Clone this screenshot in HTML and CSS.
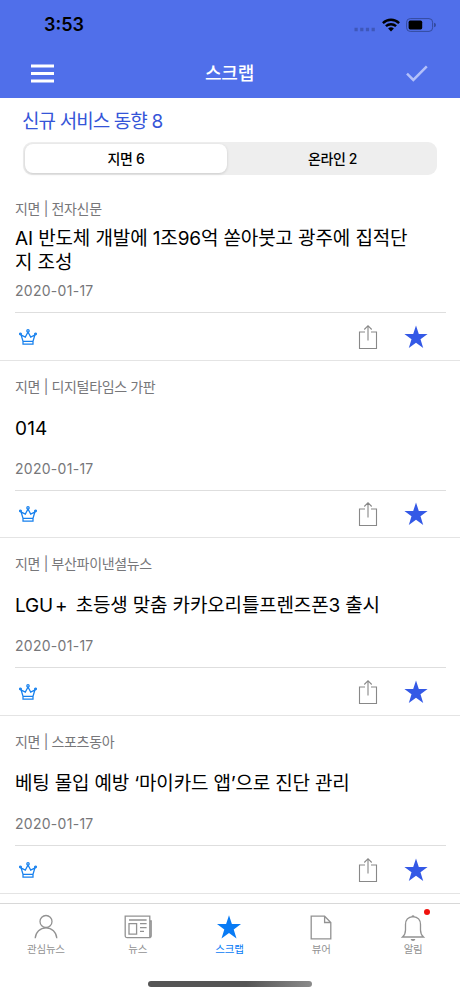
FILE: index.html
```html
<!DOCTYPE html>
<html lang="ko">
<head>
<meta charset="utf-8">
<meta name="viewport" content="width=device-width, initial-scale=1">
<title>스크랩</title>
<link rel="stylesheet" href="styles.css">
</head>
<body>
<svg class="symbols" aria-hidden="true">
  <symbol id="crown" viewBox="0 0 18 16"><g fill="none" stroke="currentColor" stroke-width="1.25"><path d="M4 12.3 2.1 6 6.3 8.1 9 3 11.7 8.1 15.9 6 14 12.3ZM4 12.3V15.1H14V12.3"/><circle cx="9" cy="1.9" r="1.2"/><circle cx="1.5" cy="4.9" r=".9"/><circle cx="16.5" cy="4.9" r=".9"/></g></symbol>
  <symbol id="share" viewBox="0 0 20 26"><path d="M7 8H1.5V24.5H18.5V8H13M10 16.5V2M6.3 5.5 10 1.7 13.7 5.5" fill="none" stroke="currentColor" stroke-width="1.1"/></symbol>
  <symbol id="star" viewBox="0 0 24 24"><path d="M12 .4 14.8 9H23.6L16.5 14.3 19.2 23 12 17.7 4.8 23 7.5 14.3 .4 9H9.2Z" fill="currentColor"/></symbol>
</svg>
<div class="app">
  <header class="header">
    <div class="status">
      <span class="time">3:53</span>
      <div class="signals">
        <svg width="22" height="5" viewBox="0 0 22 5" class="dots"><path d="M.5 .8h3.2v3.4H.5ZM6.2 .8h3.2v3.4H6.2ZM11.9 .8h3.2v3.4h-3.2ZM17.6 .8h3.2v3.4h-3.2Z" fill="#3e57ba"/></svg>
        <svg width="18" height="14" viewBox="0 0 18 14"><g fill="none" stroke="#000" stroke-width="2.4"><path d="M.9 5.1C5.5 .7 12.5 .7 17.1 5.1"/><path d="M3.9 8.2C6.8 5.5 11.2 5.5 14.1 8.2"/></g><path d="M9 13.4 6.1 10.5Q9 8.1 11.9 10.5Z"/></svg>
        <svg width="30" height="14" viewBox="0 0 30 14" class="battery"><rect x=".6" y=".6" width="26" height="12.8" rx="3.6" fill="none" stroke="#344b9e"/><rect x="2.6" y="2.6" width="13.6" height="8.8" rx="1.6"/><path d="M28 4.8Q30 5.3 30 7T28 9.2Z" fill="#344b9e"/></svg>
      </div>
    </div>
    <div class="nav">
      <svg class="menu" width="23" height="19" viewBox="0 0 23 19"><path d="M0 1.9H23M0 9.5H23M0 17H23" stroke="#fff" stroke-width="3"/></svg>
      <h1>스크랩</h1>
      <svg class="check" width="22" height="17" viewBox="0 0 22 17"><path d="M1 8.7 7.3 14.9 20.8 1.3" fill="none" stroke="#b3c0fa" stroke-width="2.5"/></svg>
    </div>
  </header>
  <main class="content">
    <h2>신규 서비스 동향 8</h2>
    <div class="segments"><button class="segment selected">지면 6</button><button class="segment">온라인 2</button></div>
    <div class="list">
      <article class="item">
        <div class="info"><p class="source">지면 | 전자신문</p><h3><span class="t1">AI 반도체 개발에 1조96억 쏟아붓고 광주에 집적단<br>지 조성</span></h3><time>2020-01-17</time></div>
        <div class="actions"><svg class="crown"><use href="#crown"/></svg><svg class="share"><use href="#share"/></svg><svg class="star"><use href="#star"/></svg></div>
      </article>
      <article class="item">
        <div class="info"><p class="source">지면 | 디지털타임스 가판</p><h3><span class="t2">014</span></h3><time>2020-01-17</time></div>
        <div class="actions"><svg class="crown"><use href="#crown"/></svg><svg class="share"><use href="#share"/></svg><svg class="star"><use href="#star"/></svg></div>
      </article>
      <article class="item">
        <div class="info"><p class="source">지면 | 부산파이낸셜뉴스</p><h3><span class="t3">LGU<span class="plus">+</span> 초등생 맞춤 카카오리틀프렌즈폰3 출시</span></h3><time>2020-01-17</time></div>
        <div class="actions"><svg class="crown"><use href="#crown"/></svg><svg class="share"><use href="#share"/></svg><svg class="star"><use href="#star"/></svg></div>
      </article>
      <article class="item">
        <div class="info"><p class="source">지면 | 스포츠동아</p><h3><span class="t4">베팅 몰입 예방 ‘마이카드 앱’으로 진단 관리</span></h3><time>2020-01-17</time></div>
        <div class="actions"><svg class="crown"><use href="#crown"/></svg><svg class="share"><use href="#share"/></svg><svg class="star"><use href="#star"/></svg></div>
      </article>
    </div>
  </main>
  <footer class="footer">
    <nav class="tabs">
      <a class="tab"><svg width="28" height="28" viewBox="0 0 28 28"><g fill="none" stroke="currentColor" stroke-width="1.3"><circle cx="14" cy="8.5" r="6"/><path d="M3.2 25.2C3.6 19 8.2 14.8 14 14.8S24.4 19 24.8 25.2"/></g></svg><span>관심뉴스</span></a>
      <a class="tab"><svg width="28" height="28" viewBox="0 0 28 28"><path d="M1.2 3.2H25.8V24.6H3.2Q1.2 24.6 1.2 22.6ZM25.8 8H27.2V22.6Q27.2 24.6 25.3 24.6M5 7H22.6M5 10.6H12.6V21.2H5ZM16 10.6H22.6M16 14.6H22.6M16 18.4H20" fill="none" stroke="currentColor" stroke-width="1.3"/></svg><span>뉴스</span></a>
      <a class="tab active"><svg width="28" height="28" viewBox="0 0 28 28"><path d="M14 2.2 16.9 11H26L18.7 16.4 21.5 25.6 14 20 6.5 25.6 9.3 16.4 2 11H11.1Z" fill="currentColor"/></svg><span>스크랩</span></a>
      <a class="tab"><svg width="28" height="28" viewBox="0 0 28 28"><path d="M4.2 3.2H17.6L23.8 9.5V25.8H4.2ZM17.6 3.2V9.5H23.8" fill="none" stroke="currentColor" stroke-width="1.3"/></svg><span>뷰어</span></a>
      <a class="tab"><svg width="28" height="28" viewBox="0 0 28 28"><path d="M14 3.6C9.3 4 6.5 6.8 6.5 11.5V17C6.5 20.5 5.6 22.2 3.5 24H24.5C22.4 22.2 21.5 20.5 21.5 17V11.5C21.5 6.8 18.7 4 14 3.6ZM12.8 3.6Q14 2 15.2 3.6" fill="none" stroke="currentColor" stroke-width="1.3"/><path d="M11.6 26H16.4Q16 28 14 28T11.6 26Z" fill="currentColor"/></svg><i class="badge"></i><span>알림</span></a>
    </nav>
    <div class="home"></div>
  </footer>
</div>
</body>
</html>
```
FILE: styles.css
```css
* { box-sizing: border-box; }
body { margin: 0; background: #fff; color: #000; font-family: Inter, "Noto Sans CJK KR", sans-serif; }
h1, h2, h3, p { margin: 0; font-weight: 400; }
svg { display: block; flex: none; }
.symbols { position: absolute; width: 0; height: 0; }
.app { width: 460px; height: 996px; display: flex; flex-direction: column; overflow: hidden; }
.header { height: 98px; flex: none; background: #506fea; }
.status { height: 50px; display: flex; justify-content: space-between; padding: 0 24px 0 44px; align-items: center; }
.time { font-size: 18px; line-height: 24px; font-weight: 600; }
.signals { display: flex; align-items: center; }
.dots { margin: 9px 6px 0 0; }
.battery { margin-left: 6px; }
.nav { height: 48px; display: grid; grid-template-columns: 60px 1fr 60px; align-items: center; padding: 0 32px 2px 31px; }
h1 { color: #fff; text-align: center; font-size: 18px; line-height: 24px; font-weight: 500; letter-spacing: -.2px; padding-top: 2px; }
.check { justify-self: end; }
.content { height: 805px; overflow: hidden; }
h2 { height: 44px; padding: 11px 22px 0; color: #3555d8; font-size: 19px; line-height: 26px; letter-spacing: -.95px; word-spacing: .2px; }
.segments { height: 33px; margin: 0 23px; padding: 2px; display: grid; grid-template-columns: 202px 1fr; background: #eee; border-radius: 9px; }
.segment { border: 0; padding: 0 0 0 3px; background: transparent; border-radius: 8px; font: 500 14px/20px Inter, "Noto Sans CJK KR", sans-serif; letter-spacing: -.35px; color: #000; }
.selected { padding: 0; background: #fff; box-shadow: 0 1px 3px rgba(0,0,0,.15); }
.list { padding-top: 8px; }
.item { height: 177.7px; border-bottom: 1px solid #e4e4e4; }
.info { height: 130px; margin: 0 14px 0 15px; padding-top: 16px; border-bottom: 1px solid #dedede; }
.source, time { display: block; color: #77777a; font-size: 14px; line-height: 20px; white-space: nowrap; }
.source { letter-spacing: -.35px; }
time { letter-spacing: .28px; }
h3 { height: 54px; margin: 5px 0 3px; display: flex; align-items: center; font-size: 19px; line-height: 24px; white-space: nowrap; }
.t1 { letter-spacing: -.13px; }
.t2 { letter-spacing: .2px; }
.t3 { letter-spacing: -.16px; }
.plus { margin: 0 3px 0 2px; }
.t4 { letter-spacing: -.18px; }
.actions { height: 47px; display: flex; align-items: center; padding: 0 32px 0 19px; }
.crown { width: 18px; height: 16px; color: #1680ee; margin-right: auto; }
.share { width: 20px; height: 26px; color: #888; margin-right: 26px; }
.star { width: 24px; height: 24px; color: #3459e6; }
.footer { height: 93px; border-top: 1px solid #d8d8d8; background: #fff; }
.tabs { height: 77px; display: grid; grid-template-columns: repeat(5, 91.8px); }
.tab { position: relative; display: flex; flex-direction: column; align-items: center; gap: 1px; padding-top: 9px; color: #929292; font-size: 10.5px; line-height: 16px; letter-spacing: -.2px; }
.active { color: #087bf5; }
.badge { position: absolute; width: 6px; height: 6px; border-radius: 50%; background: #f0120d; top: 5px; left: 57px; }
.home { width: 164px; height: 6px; margin-left: 148px; border-radius: 3px; background: linear-gradient(90deg, #555, #555 60%, #8b8b8b); }
```
